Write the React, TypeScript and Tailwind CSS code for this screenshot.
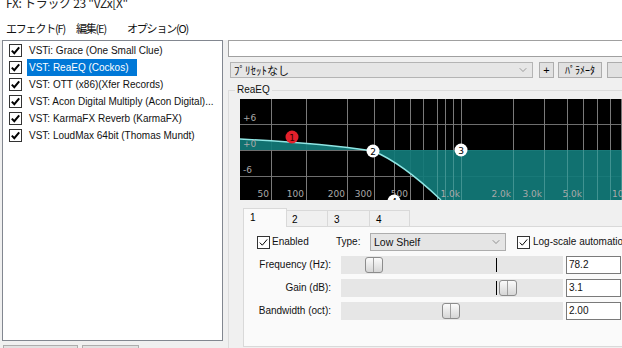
import React from "react";
import { ChevronDown } from "lucide-react";

const plugins = [
  "VSTi: Grace (One Small Clue)",
  "VST: ReaEQ (Cockos)",
  "VST: OTT (x86)(Xfer Records)",
  "VST: Acon Digital Multiply (Acon Digital)...",
  "VST: KarmaFX Reverb (KarmaFX)",
  "VST: LoudMax 64bit (Thomas Mundt)",
];

const vlines = [31, 66, 107, 134, 154, 170, 183, 197, 205, 213, 221, 273, 304, 327, 343, 357, 370, 381];

const freqLabels: [string, number][] = [
  ["50", 29],
  ["100", 64],
  ["200", 105],
  ["300", 132],
  ["500", 168],
  ["1.0k", 220],
  ["2.0k", 271],
  ["3.0k", 302],
  ["5.0k", 342],
];

function Check({ bold }: { bold?: boolean }) {
  return (
    <span className="flex h-[13px] w-[13px] shrink-0 items-center justify-center border border-[#333] bg-white">
      <svg width="11" height="11" viewBox="0 0 11 11">
        <path d="M1.8 5.6 L4.3 8.2 L9.2 2.4" fill="none" stroke="#000" strokeWidth={bold ? 2 : 1} />
      </svg>
    </span>
  );
}

function Thumb({ className }: { className: string }) {
  return (
    <div
      className={
        "absolute top-[1px] flex h-[16px] w-[18px] rounded-[3px] border border-[#8c8c8c] bg-gradient-to-b from-[#fbfbfb] to-[#d6d6d6] " +
        className
      }
    >
      <div className="w-1/2 border-r border-[#a0a0a0]" />
    </div>
  );
}

function EqGraph() {
  return (
    <svg width={390} height={101} className="mt-[3px] block" fontFamily="DejaVu Sans, sans-serif">
      <rect x={0} y={0} width={390} height={101} fill="#000" />
      {[25, 51, 77].map((y) => (
        <line key={y} x1={0} x2={390} y1={y + 0.5} y2={y + 0.5} stroke="#6e6e6e" />
      ))}
      {vlines.map((x) => (
        <line key={x} x1={x + 0.5} x2={x + 0.5} y1={0} y2={101} stroke="#7a7a7a" />
      ))}
      <path
        d="M0,51 L0,40 C60,43 100,47 133,52 C155,61 180,81 201,101 L201,106 L400,106 L400,51 Z"
        fill="#127a78"
        fillOpacity={0.93}
      />
      {[273, 304, 327, 343, 357, 370, 381, 221, 213, 205, 197].map((x) => (
        <line key={"o" + x} x1={x + 0.5} x2={x + 0.5} y1={51} y2={101} stroke="#5aa3a2" strokeOpacity={0.6} />
      ))}
      <path
        d="M0,40 C60,43 100,47 133,52 C155,61 180,81 201,101"
        fill="none"
        stroke="#8fe6e4"
        strokeWidth={1.4}
      />
      <g fontSize={9} fill="#a9a9a9">
        <text x={3} y={22}>+6</text>
        <text x={3} y={48}>+0</text>
        <text x={3} y={74}>-6</text>
        {freqLabels.map(([t, x]) => (
          <text key={t} x={x} y={98} textAnchor="end">
            {t}
          </text>
        ))}
        <text x={372} y={98}>10.0k</text>
      </g>
      <g fontSize={9} textAnchor="middle">
        <circle cx={52} cy={38} r={6.5} fill="#e3202b" />
        <text x={52} y={41.5} fill="#3a0000">1</text>
        <circle cx={133} cy={52} r={6.5} fill="#fff" />
        <text x={133} y={55.5} fill="#000">2</text>
        <circle cx={221} cy={51} r={6.5} fill="#fff" />
        <text x={221} y={54.5} fill="#000">3</text>
        <circle cx={154} cy={102} r={6.5} fill="#fff" />
        <text x={154} y={105.5} fill="#000">4</text>
      </g>
    </svg>
  );
}

export default function App() {
  return (
    <div className="relative h-[348px] w-[622px] overflow-hidden bg-[#f0f0f0] font-['Liberation_Sans',sans-serif] text-black">
      <div className="h-[13px] overflow-hidden bg-white">
        <div className="-mt-[4px] pl-[6px] font-['Noto_Sans_CJK_JP',sans-serif] text-[12px] leading-[14px] tracking-[-0.3px] text-[#222]">
          FX: トラック 23 "VZx[X"
        </div>
      </div>
      <div className="flex h-[27px] items-center bg-white pl-[6px] pt-[3px] font-['Noto_Sans_CJK_JP',sans-serif] text-[11px] tracking-[-1.2px] text-[#111]">
        <span className="w-[70px]">エフェクト(F)</span>
        <span className="w-[51px]">編集(E)</span>
        <span>オプション(O)</span>
      </div>
      <div className="flex">
        <div className="ml-[2px] w-[221px] shrink-0">
          <div className="h-[301px] border border-[#828790] bg-white pt-[1px]">
            {plugins.map((p, i) => (
              <div key={p} className="flex h-[17px] items-center pl-[6px] text-[10px] leading-[13px]">
                <Check bold />
                <span
                  className={
                    i === 1
                      ? "ml-[5px] whitespace-nowrap bg-[#0078d7] py-[2px] pl-[2px] pr-[9px] text-white"
                      : "ml-[5px] whitespace-nowrap pl-[2px] text-[#111]"
                  }
                >
                  {p}
                </span>
              </div>
            ))}
          </div>
          <div className="mt-[4px] flex">
            <div className="ml-[1px] h-[22px] w-[75px] border border-[#adadad] bg-[#e1e1e1]" />
            <div className="ml-[4px] h-[22px] w-[57px] border border-[#adadad] bg-[#e1e1e1]" />
          </div>
        </div>
        <div className="ml-[5px] min-w-0 flex-1">
          <div className="h-[17px] w-[420px] border border-[#a0a0a0] bg-white" />
          <div className="mt-[5px] flex h-[16px]">
            <div className="ml-[2px] flex w-[303px] shrink-0 items-center justify-between border border-[#b4b4b4] bg-[#e6e6e6] pl-[3px] pr-[3px]">
              <span className="font-['Noto_Sans_CJK_JP',sans-serif] text-[11px] leading-[12px] text-[#111]">ﾌﾟﾘｾｯﾄなし</span>
              <ChevronDown size={12} strokeWidth={1.2} color="#666" />
            </div>
            <div className="ml-[6px] flex w-[15px] shrink-0 items-center justify-center border border-[#adadad] bg-[#e1e1e1] text-[11px] leading-[10px]">
              +
            </div>
            <div className="ml-[4px] flex w-[44px] shrink-0 items-center justify-center border border-[#adadad] bg-[#e1e1e1] font-['Noto_Sans_CJK_JP',sans-serif] text-[10px] leading-[12px]">
              ﾊﾟﾗﾒｰﾀ
            </div>
            <div className="ml-[5px] w-[30px] shrink-0 border border-[#adadad] bg-[#e1e1e1]" />
          </div>
          <fieldset className="mt-[6px] h-[280px] w-[420px] border border-[#dcdcdc] p-0">
            <legend className="ml-[6px] px-[2px] text-[10px] leading-[12px] text-[#111]">ReaEQ</legend>
            <div className="ml-[11px]">
              <EqGraph />
              <div className="relative z-10 ml-[3px] mt-[8px] flex items-end text-[10px] leading-[11px]">
                <div className="-mb-px h-[19px] w-[44px] border border-b-0 border-[#d9d9d9] bg-[#fafafa] pl-[6px] pt-[3px]">1</div>
                <div className="h-[16px] w-[41px] border border-b-0 border-l-0 border-[#d9d9d9] bg-[#f0f0f0] pl-[5px] pt-[3px]">2</div>
                <div className="h-[16px] w-[42px] border border-b-0 border-l-0 border-[#d9d9d9] bg-[#f0f0f0] pl-[6px] pt-[3px]">3</div>
                <div className="h-[16px] w-[40px] border border-b-0 border-l-0 border-[#d9d9d9] bg-[#f0f0f0] pl-[6px] pt-[3px]">4</div>
              </div>
              <div className="ml-[3px] h-[121px] border border-[#d9d9d9] bg-[#fafafa] pl-[13px] pt-[6px] text-[10px] leading-[12px] text-[#111]">
                <div className="flex h-[18px] items-center">
                  <div className="flex w-[79px] items-center">
                    <Check />
                    <span className="ml-[2px]">Enabled</span>
                  </div>
                  <span className="w-[34px]">Type:</span>
                  <div className="flex h-[18px] w-[136px] items-center justify-between border border-[#adadad] bg-[#e5e5e5] pl-[3px] pr-[3px] text-[10.5px]">
                    <span>Low Shelf</span>
                    <ChevronDown size={12} strokeWidth={1.2} color="#555" />
                  </div>
                  <div className="ml-[11px] flex items-center whitespace-nowrap">
                    <Check />
                    <span className="ml-[3px]">Log-scale automation</span>
                  </div>
                </div>
                {[
                  ["Frequency (Hz):", "78.2", "left-[24px]", true],
                  ["Gain (dB):", "3.1", "left-[158px]", true],
                  ["Bandwidth (oct):", "2.00", "left-[101px]", false],
                ].map(([label, value, pos, tick]) => (
                  <div key={label as string} className="mt-[5px] flex h-[18px] items-center">
                    <span className="w-[74px] whitespace-nowrap text-right">{label as string}</span>
                    <div className="relative ml-[10px] h-[18px] w-[222px] bg-[#e6e6e6]">
                      {tick ? <div className="absolute left-[155px] top-[2px] h-[14px] w-px bg-black" /> : null}
                      <Thumb className={pos as string} />
                    </div>
                    <div className="ml-[3px] h-[18px] w-[55px] border border-[#7a7a7a] bg-white pl-[2px] pt-[2px]">
                      {value as string}
                    </div>
                  </div>
                ))}
              </div>
            </div>
          </fieldset>
        </div>
      </div>
    </div>
  );
}
